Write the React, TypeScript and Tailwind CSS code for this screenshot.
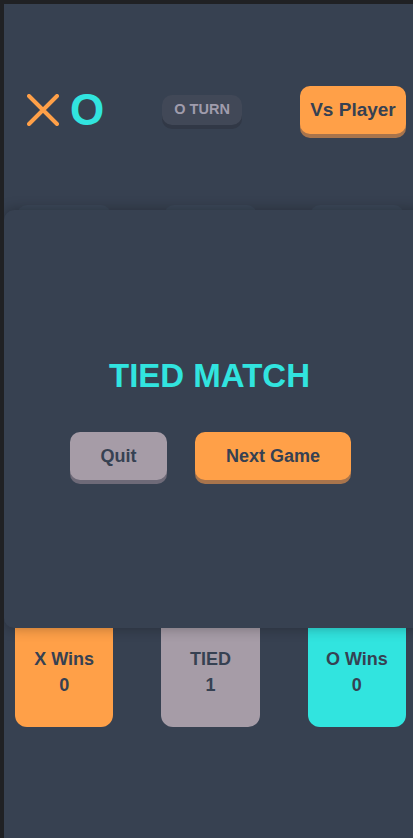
const cells = Array.from({ length: 9 }, (_, i) => i);

const scores = [
  { label: "X Wins", value: 0, bg: "bg-[#ffa048]" },
  { label: "TIED", value: 1, bg: "bg-[#a69ca7]" },
  { label: "O Wins", value: 0, bg: "bg-[#31e4df]" },
];

const App = () => {
  return (
    <div className="min-h-[838px] bg-[#202124] pt-1 pl-1 font-['Liberation_Sans',Arial,sans-serif]">
      <div className="relative h-[834px] overflow-hidden bg-[#374151]">
        {/* header */}
        <div className="flex items-center justify-between pt-[82px] pl-[23px] pr-[7px]">
          <div className="flex items-center gap-[11px]">
            <svg width="32" height="32" viewBox="0 0 32 32">
              <path
                d="M2 2 L30 30 M30 2 L2 30"
                stroke="#ffa048"
                strokeWidth="4"
                strokeLinecap="round"
              />
            </svg>
            <span className="text-[44px] font-bold leading-none text-[#31e4df]">O</span>
          </div>
          <div className="flex h-[30px] w-[80px] items-center justify-center rounded-[10px] bg-[#414857] text-[14.5px] font-bold text-[#a09cac] shadow-[0_4px_0_#313846]">
            O TURN
          </div>
          <button className="h-[48px] w-[106px] rounded-[10px] bg-[#ffa048] text-[19px] font-bold text-[#364152] shadow-[0_4px_0_#a8744c]">
            Vs Player
          </button>
        </div>

        {/* board */}
        <div className="mt-[71px] grid grid-cols-3 gap-x-[53px] gap-y-[20px] pl-[13px] pr-[9px]">
          {cells.map((c) => (
            <div key={c} className="h-[110px] rounded-[10px] bg-[#3b4758] shadow-[0_4px_0_#313a48]" />
          ))}
        </div>

        {/* scores */}
        <div className="mt-[35px] grid grid-cols-3 gap-x-[48px] pl-[11px] pr-[7px]">
          {scores.map((s) => (
            <div
              key={s.label}
              className={`flex h-[117px] flex-col items-center rounded-[12px] pt-[36px] text-[18px] font-bold leading-[26px] text-[#364152] ${s.bg}`}
            >
              <span>{s.label}</span>
              <span>{s.value}</span>
            </div>
          ))}
        </div>

        {/* result overlay */}
        <div className="absolute left-0 right-[-12px] top-[206px] flex h-[418px] flex-col items-center rounded-[10px] bg-[#374151] pt-[149px] pr-[12px] shadow-[0_0_14px_rgba(0,0,0,0.3)]">
          <h2 className="pl-[2px] text-[33px] font-bold leading-none text-[#31e4df]">TIED MATCH</h2>
          <div className="mt-[40px] flex gap-[28px] pl-[4px]">
            <button className="h-[48px] w-[97px] rounded-[10px] bg-[#a69ca7] text-[18px] font-bold text-[#364152] shadow-[0_4px_0_#6e6a78]">
              Quit
            </button>
            <button className="h-[48px] w-[156px] rounded-[10px] bg-[#ffa048] text-[18px] font-bold text-[#364152] shadow-[0_4px_0_#a8744c]">
              Next Game
            </button>
          </div>
        </div>
      </div>
    </div>
  );
};

export default App;
